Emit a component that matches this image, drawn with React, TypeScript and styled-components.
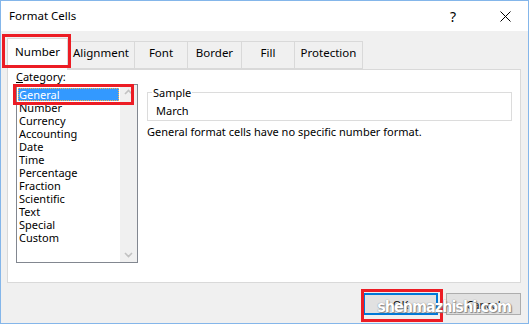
import styled, { createGlobalStyle } from 'styled-components';

const GlobalStyle = createGlobalStyle`
  html, body {
    margin: 0;
    padding: 0;
    background: #ffffff;
  }
  body {
    font-family: 'Noto Sans', 'Liberation Sans', sans-serif;
    font-size: 11px;
    color: #000000;
  }
`;

const Window = styled.div`
  width: 529px;
  height: 324px;
  box-sizing: border-box;
  border: 1px solid #84b6ea;
  display: flex;
  flex-direction: column;
  background: #f0f0f0;
`;

const TitleBar = styled.div`
  height: 30px;
  background: #ffffff;
  display: flex;
  align-items: center;
  padding: 0 0 0 8px;
  font-size: 11.5px;
`;

const Title = styled.div`
  flex: 1;
  margin-top: -1px;
`;

const TitleButton = styled.div<{ $gap?: number }>`
  width: 46px;
  height: 30px;
  margin-right: ${(p) => p.$gap ?? 0}px;
  display: flex;
  align-items: center;
  justify-content: center;
  font-size: 14px;
`;

const Body = styled.div`
  flex: 1;
  display: flex;
  flex-direction: column;
  padding: 7px 7px 9px 6px;
`;

const TabRow = styled.div`
  height: 31px;
  display: flex;
  align-items: flex-end;
  position: relative;
  z-index: 1;
`;

const Tab = styled.div<{ $w: number; $active?: boolean }>`
  position: relative;
  box-sizing: border-box;
  width: ${(p) => p.$w}px;
  height: ${(p) => (p.$active ? 32 : 28)}px;
  margin-bottom: ${(p) => (p.$active ? -1 : 0)}px;
  border: 1px solid #d9d9d9;
  border-bottom: ${(p) => (p.$active ? 'none' : '1px solid #d9d9d9')};
  border-left: ${(p) => (p.$active ? '1px solid #d9d9d9' : 'none')};
  background: ${(p) => (p.$active ? '#ffffff' : '#f0f0f0')};
  display: flex;
  align-items: flex-start;
  padding-top: ${(p) => (p.$active ? 5 : 3)}px;
  justify-content: center;
  font-size: 11.5px;
`;

const Highlight = styled.div<{ $l: number; $t: number; $w: number; $h: number }>`
  position: absolute;
  left: ${(p) => p.$l}px;
  top: ${(p) => p.$t}px;
  width: ${(p) => p.$w}px;
  height: ${(p) => p.$h}px;
  box-sizing: border-box;
  border: 3px solid #ec1c24;
  pointer-events: none;
  z-index: 5;
`;

const Panel = styled.div`
  height: 214px;
  box-sizing: border-box;
  background: #ffffff;
  border: 1px solid #d9d9d9;
  display: flex;
  gap: 9px;
  padding: 0 0 0 8px;
`;

const LeftCol = styled.div`
  width: 122px;
  display: flex;
  flex-direction: column;
`;

const Label = styled.div`
  height: 14px;
  line-height: 14px;
  u {
    text-decoration: underline;
  }
`;

const ListBox = styled.div`
  position: relative;
  height: 179px;
  box-sizing: border-box;
  border: 1px solid #828790;
  display: flex;
`;

const Items = styled.div`
  flex: 1;
  padding-top: 3px;
  display: flex;
  flex-direction: column;
`;

const Item = styled.div<{ $selected?: boolean }>`
  height: 13px;
  line-height: 13px;
  margin: 0 1px;
  padding-left: 1px;
  box-sizing: border-box;
  color: ${(p) => (p.$selected ? '#ffffff' : '#000000')};
  background: ${(p) => (p.$selected ? '#3399ff' : 'transparent')};
  outline: ${(p) => (p.$selected ? '1px dotted #ffb347' : 'none')};
  outline-offset: -1px;
  white-space: nowrap;
`;

const ScrollBar = styled.div`
  width: 17px;
  background: #f0f0f0;
  display: flex;
  flex-direction: column;
  justify-content: space-between;
  align-items: center;
  padding: 4px 0 4px;
`;

const RightCol = styled.div`
  flex: 1;
  padding: 15px 8px 0 0;
  display: flex;
  flex-direction: column;
`;

const GroupBox = styled.fieldset`
  margin: 0;
  padding: 4px 8px 2px 8px;
  border: 1px solid #dcdcdc;
  min-width: 0;
`;

const Legend = styled.legend`
  padding: 0 1px;
  margin-left: -4px;
  line-height: 15px;
`;

const SampleText = styled.div`
  line-height: 14px;
`;

const Description = styled.div`
  margin-top: 4px;
  line-height: 14px;
`;

const ButtonRow = styled.div`
  margin-top: 10px;
  display: flex;
  justify-content: flex-end;
  gap: 8px;
  position: relative;
`;

const Button = styled.div<{ $default?: boolean }>`
  position: relative;
  width: 75px;
  height: 22px;
  box-sizing: border-box;
  background: #e1e1e1;
  border: ${(p) => (p.$default ? '2px solid #0078d7' : '1px solid #adadad')};
  display: flex;
  align-items: center;
  justify-content: center;
`;

const Watermark = styled.div`
  position: absolute;
  right: 10px;
  top: 4px;
  font-family: 'DejaVu Sans Condensed', 'DejaVu Sans', sans-serif;
  font-stretch: condensed;
  font-weight: bold;
  font-size: 16px;
  letter-spacing: -1px;
  line-height: 20px;
  color: #ffffff;
  text-shadow: 0 0 1px #6a6a6a, 1px 1px 1px #8a8a8a;
  pointer-events: none;
  z-index: 6;
`;

const categories = [
  'General',
  'Number',
  'Currency',
  'Accounting',
  'Date',
  'Time',
  'Percentage',
  'Fraction',
  'Scientific',
  'Text',
  'Special',
  'Custom',
];

const tabs = [
  { name: 'Number', w: 61 },
  { name: 'Alignment', w: 67 },
  { name: 'Font', w: 53 },
  { name: 'Border', w: 54 },
  { name: 'Fill', w: 53 },
  { name: 'Protection', w: 68 },
];

function Chevron({ up }: { up?: boolean }) {
  return (
    <svg width="9" height="6" viewBox="0 0 9 6">
      <path
        d={up ? 'M1 5 L4.5 1.5 L8 5' : 'M1 1 L4.5 4.5 L8 1'}
        fill="none"
        stroke="#c2c2c2"
        strokeWidth="1.6"
      />
    </svg>
  );
}

function App() {
  return (
    <>
      <GlobalStyle />
      <Window>
        <TitleBar>
          <Title>Format Cells</Title>
          <TitleButton $gap={6}>?</TitleButton>
          <TitleButton>
            <svg width="11" height="11" viewBox="0 0 11 11">
              <path d="M0.5 0.5 L10.5 10.5 M10.5 0.5 L0.5 10.5" stroke="#000" strokeWidth="1" />
            </svg>
          </TitleButton>
        </TitleBar>
        <Body>
          <TabRow>
            {tabs.map((t, i) => (
              <Tab key={t.name} $w={t.w} $active={i === 0}>
                {t.name}
                {i === 0 && <Highlight $l={-6} $t={-5} $w={69} $h={34} />}
              </Tab>
            ))}
          </TabRow>
          <Panel>
            <LeftCol>
              <Label>
                <u>C</u>ategory:
              </Label>
              <ListBox>
                <Items>
                  {categories.map((c, i) => (
                    <Item key={c} $selected={i === 0}>
                      {c}
                    </Item>
                  ))}
                </Items>
                <ScrollBar>
                  <Chevron up />
                  <Chevron />
                </ScrollBar>
                <Highlight $l={-4} $t={-1} $w={121} $h={21} />
              </ListBox>
            </LeftCol>
            <RightCol>
              <GroupBox>
                <Legend>Sample</Legend>
                <SampleText>March</SampleText>
              </GroupBox>
              <Description>General format cells have no specific number format.</Description>
            </RightCol>
          </Panel>
          <ButtonRow>
            <Button $default>
              OK
              <Highlight $l={-4} $t={-6} $w={82} $h={33} />
            </Button>
            <Button>Cancel</Button>
            <Watermark>shenmazhishi.com</Watermark>
          </ButtonRow>
        </Body>
      </Window>
    </>
  );
}

export default App;
